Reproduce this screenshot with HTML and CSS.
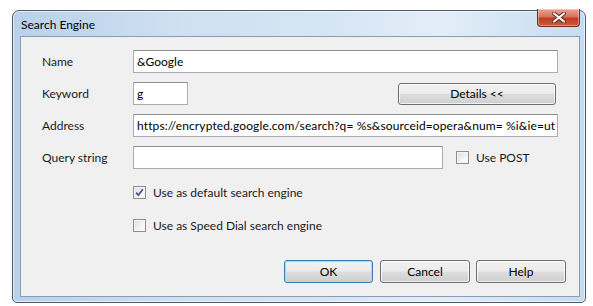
FILE: index.html
```html
<!DOCTYPE html>
<html>
<head>
<meta charset="utf-8">
<link rel="stylesheet" href="styles.css">
</head>
<body>
<div class="window">
  <div class="titlebar">
    <span class="title">Search Engine</span>
    <div class="close">
      <svg width="16" height="11" viewBox="0 0 16 11"><path d="M3 1.5 L13 9.5 M13 1.5 L3 9.5" stroke="#5a2a20" stroke-width="4" stroke-linecap="round"/><path d="M3 1.5 L13 9.5 M13 1.5 L3 9.5" stroke="#ffffff" stroke-width="2.2" stroke-linecap="round"/></svg>
    </div>
  </div>
  <div class="panel">
    <div class="form">
      <label class="lbl">Name</label>
      <div class="field full"><span class="val">&amp;Google</span></div>

      <label class="lbl">Keyword</label>
      <div class="row">
        <div class="field kw"><span class="val">g</span></div>
        <div class="btn details">Details &lt;&lt;</div>
      </div>

      <label class="lbl">Address</label>
      <div class="field full"><span class="val addr">https://encrypted.google.com/search?q= %s&amp;sourceid=opera&amp;num= %i&amp;ie=ut</span></div>

      <label class="lbl">Query string</label>
      <div class="row">
        <div class="field query"></div>
        <div class="check post"><span class="box"></span><span>Use POST</span></div>
      </div>
    </div>

    <div class="options">
      <div class="check"><span class="box checked"><svg width="9" height="9" viewBox="0 0 9 9"><path d="M1.2 4.6 L3.4 7.2 L7.8 1.2" fill="none" stroke="#3f4f8c" stroke-width="1.7"/></svg></span><span>Use as default search engine</span></div>
      <div class="check"><span class="box"></span><span>Use as Speed Dial search engine</span></div>
    </div>

    <div class="buttons">
      <div class="btn default">OK</div>
      <div class="btn">Cancel</div>
      <div class="btn">Help</div>
    </div>
  </div>
</div>
</body>
</html>
```

FILE: styles.css
```css
* { box-sizing: border-box; }
html, body { margin: 0; padding: 0; background: #ffffff; }
body {
  font-family: "Lato", "Noto Sans", sans-serif;
  font-size: 12px;
  color: #1a1a1a;
}
.window {
  margin: 10px 0 0 12px;
  width: 574px;
  height: 293px;
  border: 1px solid #4b5a6b;
  border-radius: 7px 7px 5px 5px;
  background: linear-gradient(90deg, #b9d1e9 0%, #cfe0f1 30%, #d6e5f3 55%, #e2edf8 75%, #c6dcf0 100%);
  padding: 0 5px 5px 7px;
  display: flex;
  flex-direction: column;
  box-shadow: 0 0 0 1px rgba(255,255,255,0.6) inset;
}
.titlebar {
  height: 25px;
  display: flex;
  justify-content: space-between;
  align-items: flex-start;
}
.title {
  margin-top: 6px;
  padding-left: 1px;
  color: #000;
  font-size: 12px;
}
.close {
  margin-top: -2px;
  width: 43px;
  height: 18px;
  border: 1px solid #6e3025;
  border-top: none;
  border-radius: 0 0 4px 4px;
  background: linear-gradient(180deg, #e9a697 0%, #d9725c 45%, #c23c20 55%, #cf5a3a 100%);
  display: flex;
  align-items: center;
  justify-content: center;
  box-shadow: inset 0 0 0 1px rgba(255,255,255,0.35);
}
.close svg { display: block; }
.panel {
  flex: 1;
  background: #f0f0f0;
  border: 1px solid #8a9cb0;
  padding: 13px 21px 0 21px;
  display: flex;
  flex-direction: column;
}
.form {
  display: grid;
  grid-template-columns: 91px 1fr;
  row-gap: 9px;
  align-items: center;
}
.lbl { line-height: 23px; }
.field {
  height: 23px;
  background: #fff;
  border: 1px solid #abadb3;
  border-top-color: #8e8f8f;
  display: flex;
  align-items: center;
  overflow: hidden;
  white-space: nowrap;
}
.field .val { padding-left: 3px; color: #000; }
.field .addr { letter-spacing: 0.12px; }
.full { width: 425px; }
.row {
  display: flex;
  align-items: center;
}
.kw { width: 55px; }
.query { width: 310px; }
.check {
  display: flex;
  align-items: center;
  gap: 7px;
}
.post { margin-left: 13px; }
.box {
  width: 13px;
  height: 13px;
  border: 1px solid #8f8f8f;
  background: linear-gradient(135deg, #dcdcdc 0%, #f4f4f4 60%, #ffffff 100%);
  box-shadow: inset 0 0 0 1px #f4f4f4;
  display: flex;
  align-items: center;
  justify-content: center;
}
.options {
  margin-left: 91px;
  margin-top: 16px;
  display: flex;
  flex-direction: column;
  gap: 18px;
}
.buttons {
  margin-top: auto;
  margin-bottom: 13px;
  margin-right: -8px;
  display: flex;
  justify-content: flex-end;
  gap: 6px;
}
.btn {
  width: 90px;
  height: 23px;
  border: 1px solid #707070;
  border-radius: 3px;
  background: linear-gradient(180deg, #f2f2f2 0%, #ebebeb 48%, #dddddd 52%, #cfcfcf 100%);
  box-shadow: inset 0 0 0 1px rgba(255,255,255,0.7);
  display: flex;
  align-items: center;
  justify-content: center;
  color: #000;
}
.btn.details { width: 158px; margin-left: auto; margin-right: 2px; height: 22px; }
.btn.default {
  width: 89px;
  border-color: #3c7fb1;
  box-shadow: inset 0 0 0 1px #a6d9f4;
  margin-right: 1px;
}
```
